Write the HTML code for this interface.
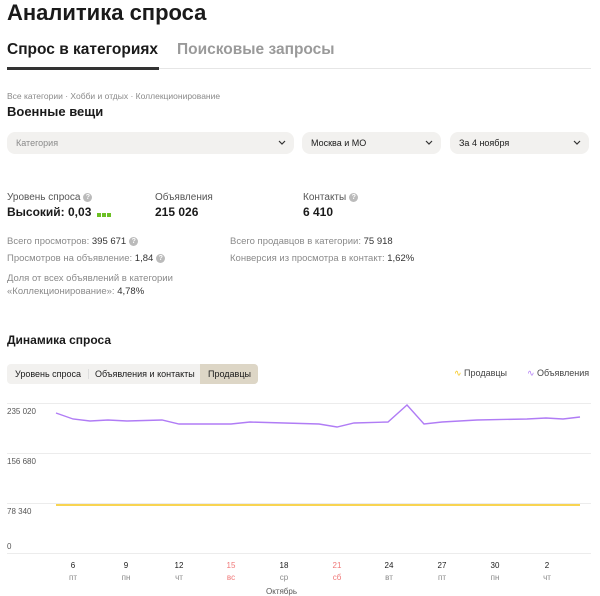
<!DOCTYPE html>
<html><head><meta charset="utf-8"><style>
*{margin:0;padding:0;box-sizing:border-box}
body{width:600px;height:595px;background:#fff;font-family:"Liberation Sans",sans-serif;color:#1a1a1a;position:relative;overflow:hidden}
.a{position:absolute;white-space:nowrap}
.g{color:#8a8a8a}
.dd{position:absolute;top:132px;height:22px;background:#f2f1ef;border-radius:8px;font-size:9px;line-height:22px;padding-left:9px}
.dd svg{position:absolute;right:8px;top:8px}
.lbl{font-size:10px;color:#555}
.val{font-size:12px;font-weight:bold}
.q{display:inline-block;width:9px;height:9px;border-radius:50%;background:#bbb;color:#fff;font-size:7px;line-height:9px;text-align:center;vertical-align:middle;margin-left:3px;font-weight:bold}
.row{font-size:9.5px;color:#8a8a8a}
.row b{font-weight:normal;color:#333}
.ax{font-size:8px;color:#555}
.tk{position:absolute;font-size:8px;text-align:center;width:30px;line-height:12px}
</style></head><body>
<div class="a" style="left:7px;top:0px;font-size:22px;font-weight:bold">Аналитика спроса</div>
<div class="a" style="left:7px;top:41px;font-size:15.5px;font-weight:bold">Спрос в категориях</div>
<div class="a" style="left:177px;top:41px;font-size:15.5px;font-weight:bold;color:#9a9a9a">Поисковые запросы</div>
<div class="a" style="left:7px;top:68px;width:584px;height:1px;background:#e6e6e6"></div>
<div class="a" style="left:7px;top:67px;width:152px;height:3px;background:#333"></div>
<div class="a g" style="left:7px;top:91px;font-size:8.5px">Все категории · Хобби и отдых · Коллекционирование</div>
<div class="a" style="left:7px;top:104px;font-size:13px;font-weight:bold">Военные вещи</div>
<div class="dd g" style="left:7px;width:287px">Категория<svg width="8" height="6"><path d="M1 1l3 3 3-3" stroke="#333" fill="none" stroke-width="1.2"/></svg></div>
<div class="dd" style="left:302px;width:139px">Москва и МО<svg width="8" height="6"><path d="M1 1l3 3 3-3" stroke="#333" fill="none" stroke-width="1.2"/></svg></div>
<div class="dd" style="left:450px;width:139px">За 4 ноября<svg width="8" height="6"><path d="M1 1l3 3 3-3" stroke="#333" fill="none" stroke-width="1.2"/></svg></div>

<div class="a lbl" style="left:7px;top:192px">Уровень спроса<span class="q">?</span></div>
<div class="a val" style="left:7px;top:205px">Высокий: 0,03 <span style="display:inline-block;vertical-align:middle;margin-left:2px"><i style="display:inline-block;width:4px;height:4px;background:#6cc024;margin-right:1px"></i><i style="display:inline-block;width:4px;height:4px;background:#6cc024;margin-right:1px"></i><i style="display:inline-block;width:4px;height:4px;background:#6cc024"></i></span></div>
<div class="a lbl" style="left:155px;top:192px">Объявления</div>
<div class="a val" style="left:155px;top:205px">215 026</div>
<div class="a lbl" style="left:303px;top:192px">Контакты<span class="q">?</span></div>
<div class="a val" style="left:303px;top:205px">6 410</div>

<div class="a row" style="left:7px;top:236px">Всего просмотров: <b>395 671</b><span class="q">?</span></div>
<div class="a row" style="left:7px;top:253px">Просмотров на объявление: <b>1,84</b><span class="q">?</span></div>
<div class="a row" style="left:7px;top:272px;line-height:13px">Доля от всех объявлений в категории<br>«Коллекционирование»: <b>4,78%</b></div>
<div class="a row" style="left:230px;top:236px">Всего продавцов в категории: <b>75 918</b></div>
<div class="a row" style="left:230px;top:253px">Конверсия из просмотра в контакт: <b>1,62%</b></div>

<div class="a" style="left:7px;top:333px;font-size:12px;font-weight:bold">Динамика спроса</div>
<div class="a" style="left:7px;top:364px;width:251px;height:20px;background:#f2f1ef;border-radius:4px;font-size:9px;line-height:20px">
<span style="position:absolute;left:8px">Уровень спроса</span>
<span style="position:absolute;left:81px;top:5px;width:1px;height:10px;background:#ddd"></span>
<span style="position:absolute;left:88px">Объявления и контакты</span>
<span style="position:absolute;left:193px;width:58px;height:20px;background:#ddd6c6;border-radius:0 4px 4px 0;padding-left:8px">Продавцы</span></div>
<div class="a" style="left:454px;top:368px;font-size:9px;color:#444"><span style="color:#f5c518">∿</span> Продавцы</div>
<div class="a" style="left:527px;top:368px;font-size:9px;color:#444"><span style="color:#b07cf5">∿</span> Объявления</div>

<svg class="a" style="left:0;top:0" width="600" height="595">
<g stroke="#ececec" stroke-width="1"><line x1="7" x2="591" y1="403.5" y2="403.5"/><line x1="7" x2="591" y1="453.5" y2="453.5"/><line x1="7" x2="591" y1="503.5" y2="503.5"/><line x1="7" x2="591" y1="553.5" y2="553.5"/></g>
<polyline fill="none" stroke="#b07cf5" stroke-width="1.4" points="56,413 73,419 90,421 108,420 127,421 162,420 179,424 231,424 250,422 319,424 337,427 354,423 388,422 407,405 424,424 442,422 477,420 527,419 546,418 563,419 580,417"/>
<line x1="56" x2="580" y1="505" y2="505" stroke="#f5c518" stroke-width="1.6"/>
</svg>
<div class="a ax" style="left:7px;top:407px">235 020</div>
<div class="a ax" style="left:7px;top:457px">156 680</div>
<div class="a ax" style="left:7px;top:507px">78 340</div>
<div class="a ax" style="left:7px;top:542px">0</div>
<div class="tk" style="left:58px;top:560px">6<br><span class="g">пт</span></div>
<div class="tk" style="left:111px;top:560px">9<br><span class="g">пн</span></div>
<div class="tk" style="left:164px;top:560px">12<br><span class="g">чт</span></div>
<div class="tk" style="left:216px;top:560px;color:#f07878">15<br>вс</div>
<div class="tk" style="left:269px;top:560px">18<br><span class="g">ср</span></div>
<div class="tk" style="left:322px;top:560px;color:#f07878">21<br>сб</div>
<div class="tk" style="left:374px;top:560px">24<br><span class="g">вт</span></div>
<div class="tk" style="left:427px;top:560px">27<br><span class="g">пт</span></div>
<div class="tk" style="left:480px;top:560px">30<br><span class="g">пн</span></div>
<div class="tk" style="left:532px;top:560px">2<br><span class="g">чт</span></div>
<div class="a ax" style="left:266px;top:587px">Октябрь</div>
</body></html>
